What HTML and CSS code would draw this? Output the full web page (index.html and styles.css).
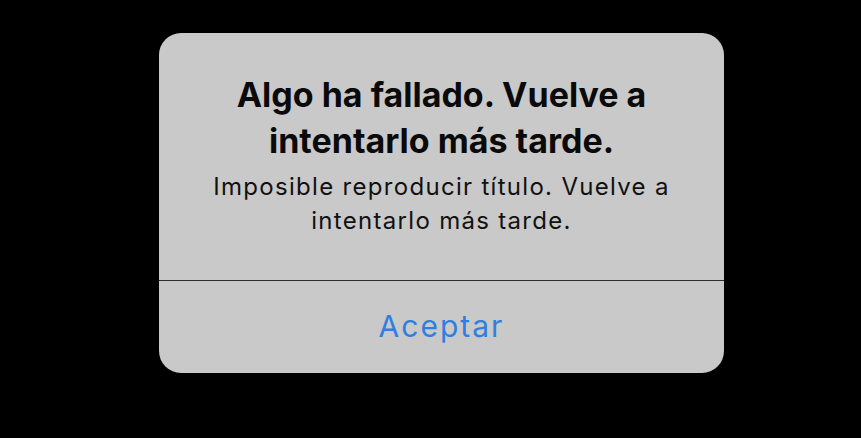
FILE: index.html
```html
<!DOCTYPE html>
<html lang="es">
<head>
<meta charset="utf-8">
<link rel="stylesheet" href="styles.css">
</head>
<body>
<div class="alert">
  <div class="content">
    <div class="title">Algo ha fallado. Vuelve a<br>intentarlo más tarde.</div>
    <div class="message">Imposible reproducir título. Vuelve a<br>intentarlo más tarde.</div>
  </div>
  <div class="action">Aceptar</div>
</div>
</body>
</html>
```
FILE: styles.css
```css
html, body {
  margin: 0;
  padding: 0;
  background: #000;
  height: 100%;
}
body {
  font-family: Inter, "Noto Sans", sans-serif;
  padding-top: 33px;
  box-sizing: border-box;
}
.alert {
  margin-left: 159px;
  width: 565px;
  height: 340px;
  background: #c9c9c9;
  border-radius: 22px;
  display: flex;
  flex-direction: column;
  overflow: hidden;
}
.content {
  height: 248px;
  box-sizing: border-box;
  padding-top: 39px;
  text-align: center;
  border-bottom: 1px solid #2e2e2e;
}
.title {
  font-size: 34px;
  font-weight: 700;
  line-height: 46px;
  color: #0a0a0a;
}
.message {
  font-size: 24px;
  font-weight: 400;
  line-height: 34px;
  letter-spacing: 1.3px;
  color: #111;
  margin-top: 6px;
}
.action {
  flex: 1;
  display: flex;
  align-items: center;
  justify-content: center;
  font-size: 30px;
  letter-spacing: 2px;
  color: #2f7fe0;
  padding-bottom: 2px;
}
```
